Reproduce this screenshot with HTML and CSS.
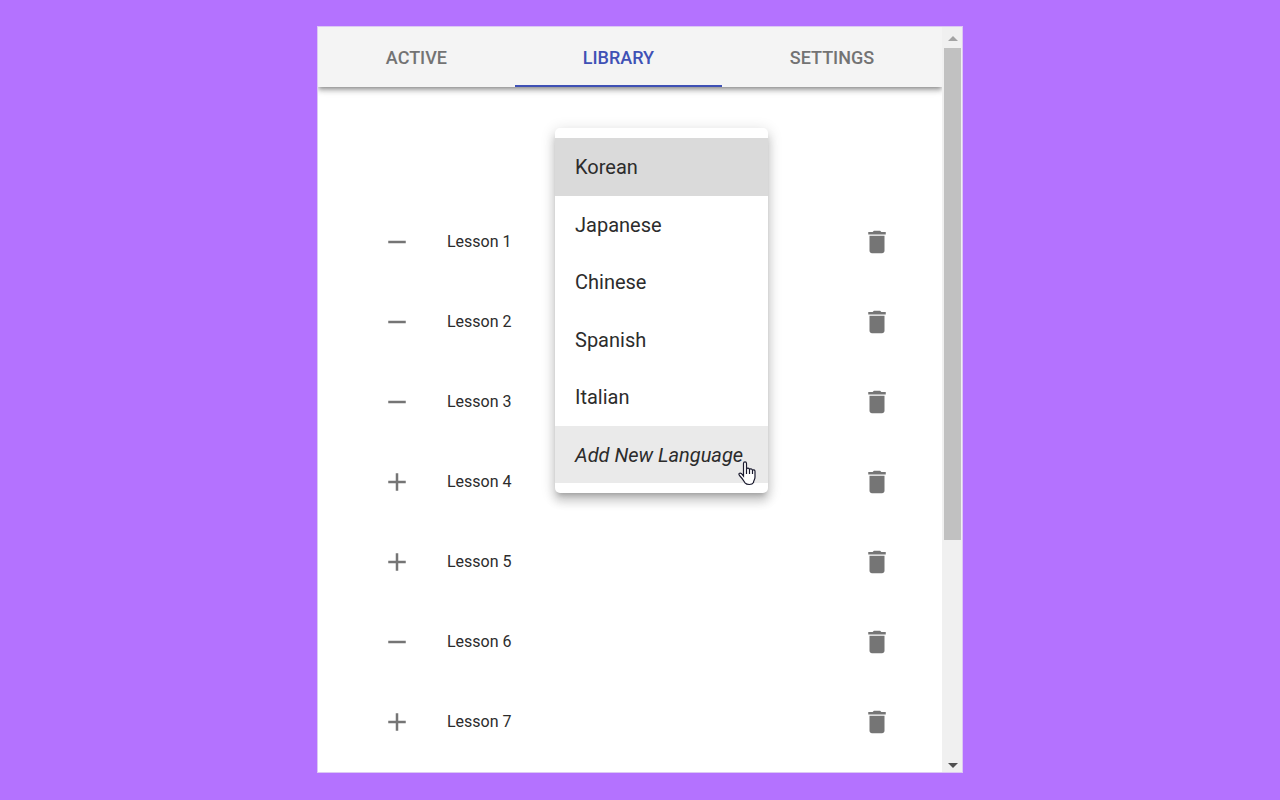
FILE: index.html
```html
<!DOCTYPE html>
<html lang="en">
<head>
<meta charset="utf-8">
<meta name="viewport" content="width=device-width, initial-scale=1">
<title>Library</title>
<link rel="stylesheet" href="styles.css">
</head>
<body>
<svg class="symbols" aria-hidden="true">
  <symbol id="minus" viewBox="0 0 24 24"><path d="M19 13H5v-2h14v2z"/></symbol>
  <symbol id="plus" viewBox="0 0 24 24"><path d="M19 13h-6v6h-2v-6H5v-2h6V5h2v6h6v2z"/></symbol>
  <symbol id="trash" viewBox="0 0 24 24"><path d="M6 19c0 1.100.9 2 2 2h8c1.100 0 2-.9 2-2V7H6v12zM19 4h-3.500l-1-1h-5l-1 1H5v2h14V4z"/></symbol>
</svg>
<div class="window">
  <div class="content">
    <nav class="tabs" role="tablist">
      <button class="tab" role="tab">ACTIVE</button>
      <button class="tab tab-selected" role="tab" aria-selected="true">LIBRARY</button>
      <button class="tab" role="tab">SETTINGS</button>
    </nav>
    <main class="library">
      <ul class="lessons">
        <li class="lesson"><button class="icon-button" aria-label="Remove lesson"><svg class="icon"><use href="#minus"/></svg></button><span class="lesson-name">Lesson 1</span><button class="icon-button" aria-label="Delete lesson"><svg class="icon"><use href="#trash"/></svg></button></li>
        <li class="lesson"><button class="icon-button" aria-label="Remove lesson"><svg class="icon"><use href="#minus"/></svg></button><span class="lesson-name">Lesson 2</span><button class="icon-button" aria-label="Delete lesson"><svg class="icon"><use href="#trash"/></svg></button></li>
        <li class="lesson"><button class="icon-button" aria-label="Remove lesson"><svg class="icon"><use href="#minus"/></svg></button><span class="lesson-name">Lesson 3</span><button class="icon-button" aria-label="Delete lesson"><svg class="icon"><use href="#trash"/></svg></button></li>
        <li class="lesson"><button class="icon-button" aria-label="Add lesson"><svg class="icon"><use href="#plus"/></svg></button><span class="lesson-name">Lesson 4</span><button class="icon-button" aria-label="Delete lesson"><svg class="icon"><use href="#trash"/></svg></button></li>
        <li class="lesson"><button class="icon-button" aria-label="Add lesson"><svg class="icon"><use href="#plus"/></svg></button><span class="lesson-name">Lesson 5</span><button class="icon-button" aria-label="Delete lesson"><svg class="icon"><use href="#trash"/></svg></button></li>
        <li class="lesson"><button class="icon-button" aria-label="Remove lesson"><svg class="icon"><use href="#minus"/></svg></button><span class="lesson-name">Lesson 6</span><button class="icon-button" aria-label="Delete lesson"><svg class="icon"><use href="#trash"/></svg></button></li>
        <li class="lesson"><button class="icon-button" aria-label="Add lesson"><svg class="icon"><use href="#plus"/></svg></button><span class="lesson-name">Lesson 7</span><button class="icon-button" aria-label="Delete lesson"><svg class="icon"><use href="#trash"/></svg></button></li>
      </ul>
    </main>
  </div>
  <div class="scrollbar" aria-hidden="true">
    <svg class="arrow arrow-up" viewBox="0 0 10 5"><path d="M5 0l5 5H0z"/></svg>
    <div class="track"><div class="thumb"></div></div>
    <svg class="arrow arrow-down" viewBox="0 0 10 5"><path d="M0 0h10L5 5z"/></svg>
  </div>
  <div class="menu" role="menu">
    <button class="menu-item menu-item-selected" role="menuitem">Korean</button>
    <button class="menu-item" role="menuitem">Japanese</button>
    <button class="menu-item" role="menuitem">Chinese</button>
    <button class="menu-item" role="menuitem">Spanish</button>
    <button class="menu-item" role="menuitem">Italian</button>
    <button class="menu-item menu-item-add" role="menuitem">Add New Language</button>
    <svg class="pointer" viewBox="0 0 18 25" aria-hidden="true"><path d="M5.500 15V2.500C5.500.3 8.500.3 8.500 2.500V8c.3-1.300 2.700-1.300 3 .5 .5-1.100 2.700-.9 3 .8 .7-.9 2.500-.5 2.500 1.200V16c0 3-1.500 3.500-1.500 5.500-1.500 2.600-6.500 2.600-8.500.3C5.500 19.500 4 17 1.500 14.500 .2 12.800 1.700 11.400 3.300 12.400L5.500 15zM8.500 8v5M11.500 8.500V13M14.500 9.500V13"/></svg>
  </div>
</div>
</body>
</html>
```

FILE: styles.css
```css
* {
  box-sizing: border-box;
}

body {
  margin: 0;
  height: 100vh;
  padding: 26px 0 27px;
  display: flex;
  justify-content: center;
  background: #b472ff;
  color: #2c2c2c;
  font-family: Roboto, "Liberation Sans", sans-serif;
}

button {
  padding: 0;
  border: 0;
  background: none;
  color: inherit;
  font: inherit;
}

.symbols {
  display: none;
}

.window {
  position: relative;
  display: flex;
  width: 100%;
  max-width: 646px;
  border: 1px solid #dcc8f4;
  background: #fff;
}

.content {
  flex: 1;
  overflow: hidden;
}

.tabs {
  display: flex;
  height: 60px;
  background: #f4f4f4;
  box-shadow: 0 2px 4px -1px rgba(0, 0, 0, 0.3), 0 4px 5px rgba(0, 0, 0, 0.18), 0 1px 10px rgba(0, 0, 0, 0.12);
}

.tab {
  flex: 1 1 auto;
  padding-top: 2px;
  border-bottom: 2px solid transparent;
  color: #737373;
  font-size: 18px;
  font-weight: 500;
}

.tab-selected {
  border-color: #3f51b5;
  color: #3f51b5;
}

.library {
  padding: 115px 50px 0 64px;
}

.lessons {
  margin: 0;
  padding: 0;
  list-style: none;
}

.lesson {
  display: flex;
  align-items: center;
  height: 80px;
}

.lesson-name {
  flex: 1;
  padding: 0 0 2px 35px;
  font-size: 16px;
}

.icon-button {
  display: flex;
}

.icon {
  width: 30px;
  height: 30px;
  fill: #757575;
}

.scrollbar {
  display: flex;
  flex-direction: column;
  align-items: center;
  justify-content: space-between;
  width: 20px;
  padding: 9px 1px 4px 2px;
  background: #f0f0f0;
}

.arrow {
  width: 10px;
  height: 5px;
}

.arrow-up {
  fill: #a3a3a3;
}

.arrow-down {
  fill: #505050;
}

.track {
  flex: 1;
  width: 100%;
  margin: 7px 0 12px;
}

.thumb {
  height: 70%;
  background: #c1c1c1;
}

.menu {
  position: absolute;
  top: 101px;
  left: 237px;
  display: flex;
  flex-direction: column;
  width: 213px;
  height: 365px;
  padding: 10px 0;
  border-radius: 5px;
  background: #fff;
  box-shadow: 0 5px 5px -3px rgba(0, 0, 0, 0.2), 0 8px 10px 1px rgba(0, 0, 0, 0.14), 0 3px 14px 2px rgba(0, 0, 0, 0.12);
}

.menu-item {
  flex: 1;
  padding: 1px 20px 0;
  font-size: 20px;
  text-align: left;
  white-space: nowrap;
}

.menu-item-selected {
  background: #dadada;
}

.menu-item-add {
  background: #eaeaea;
  font-style: italic;
}

.pointer {
  position: absolute;
  right: 12px;
  bottom: 7px;
  width: 18px;
  height: 25px;
  fill: #fff;
  stroke: #1a1a2e;
  stroke-width: 1.2;
}
```
